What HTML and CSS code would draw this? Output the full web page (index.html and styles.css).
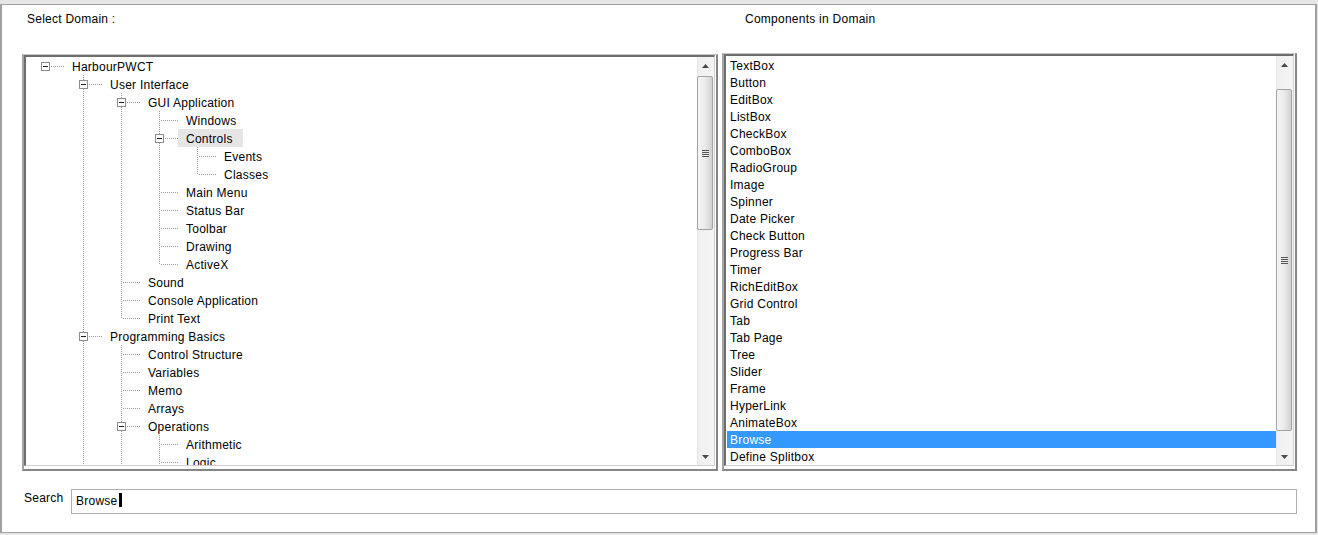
FILE: index.html
```html
<!DOCTYPE html>
<html>
<head>
<meta charset="utf-8">
<title>Select Domain</title>
<link rel="stylesheet" href="styles.css">
</head>
<body>
<div class="window">
  <div class="header">
    <div class="hcell">Select Domain :</div>
    <div class="hcell2">Components in Domain</div>
  </div>
  <div class="panes">
    <div class="pane pane-left">
      <div class="inner">
        <div class="tree">
          <div class="row"><span class="c h"><i class="box"></i></span><span class="lbl">HarbourPWCT</span></div>
          <div class="row"><span class="c"></span><span class="c t"><i class="box"></i></span><span class="lbl">User Interface</span></div>
          <div class="row"><span class="c"></span><span class="c v"></span><span class="c t"><i class="box"></i></span><span class="lbl">GUI Application</span></div>
          <div class="row"><span class="c"></span><span class="c v"></span><span class="c v"></span><span class="c t"></span><span class="lbl">Windows</span></div>
          <div class="row"><span class="c"></span><span class="c v"></span><span class="c v"></span><span class="c t"><i class="box"></i></span><span class="lbl sel">Controls</span></div>
          <div class="row"><span class="c"></span><span class="c v"></span><span class="c v"></span><span class="c v"></span><span class="c t"></span><span class="lbl">Events</span></div>
          <div class="row"><span class="c"></span><span class="c v"></span><span class="c v"></span><span class="c v"></span><span class="c l"></span><span class="lbl">Classes</span></div>
          <div class="row"><span class="c"></span><span class="c v"></span><span class="c v"></span><span class="c t"></span><span class="lbl">Main Menu</span></div>
          <div class="row"><span class="c"></span><span class="c v"></span><span class="c v"></span><span class="c t"></span><span class="lbl">Status Bar</span></div>
          <div class="row"><span class="c"></span><span class="c v"></span><span class="c v"></span><span class="c t"></span><span class="lbl">Toolbar</span></div>
          <div class="row"><span class="c"></span><span class="c v"></span><span class="c v"></span><span class="c t"></span><span class="lbl">Drawing</span></div>
          <div class="row"><span class="c"></span><span class="c v"></span><span class="c v"></span><span class="c l"></span><span class="lbl">ActiveX</span></div>
          <div class="row"><span class="c"></span><span class="c v"></span><span class="c t"></span><span class="lbl">Sound</span></div>
          <div class="row"><span class="c"></span><span class="c v"></span><span class="c t"></span><span class="lbl">Console Application</span></div>
          <div class="row"><span class="c"></span><span class="c v"></span><span class="c l"></span><span class="lbl">Print Text</span></div>
          <div class="row"><span class="c"></span><span class="c t"><i class="box"></i></span><span class="lbl">Programming Basics</span></div>
          <div class="row"><span class="c"></span><span class="c v"></span><span class="c t"></span><span class="lbl">Control Structure</span></div>
          <div class="row"><span class="c"></span><span class="c v"></span><span class="c t"></span><span class="lbl">Variables</span></div>
          <div class="row"><span class="c"></span><span class="c v"></span><span class="c t"></span><span class="lbl">Memo</span></div>
          <div class="row"><span class="c"></span><span class="c v"></span><span class="c t"></span><span class="lbl">Arrays</span></div>
          <div class="row"><span class="c"></span><span class="c v"></span><span class="c t"><i class="box"></i></span><span class="lbl">Operations</span></div>
          <div class="row"><span class="c"></span><span class="c v"></span><span class="c v"></span><span class="c t"></span><span class="lbl">Arithmetic</span></div>
          <div class="row"><span class="c"></span><span class="c v"></span><span class="c v"></span><span class="c t"></span><span class="lbl">Logic</span></div>
        </div>
        <div class="sb">
          <div class="arr"><svg width="7" height="4" viewBox="0 0 7 4"><path d="M3.5 0L7 4H0Z" fill="#4a4a4a"/></svg></div>
          <div class="trk"><div class="thumb thumb-left"><span class="grip"></span></div></div>
          <div class="arr"><svg width="7" height="4" viewBox="0 0 7 4"><path d="M0 0H7L3.5 4Z" fill="#4a4a4a"/></svg></div>
        </div>
      </div>
    </div>
    <div class="pane pane-right">
      <div class="inner">
        <div class="list">
          <div class="item">TextBox</div>
          <div class="item">Button</div>
          <div class="item">EditBox</div>
          <div class="item">ListBox</div>
          <div class="item">CheckBox</div>
          <div class="item">ComboBox</div>
          <div class="item">RadioGroup</div>
          <div class="item">Image</div>
          <div class="item">Spinner</div>
          <div class="item">Date Picker</div>
          <div class="item">Check Button</div>
          <div class="item">Progress Bar</div>
          <div class="item">Timer</div>
          <div class="item">RichEditBox</div>
          <div class="item">Grid Control</div>
          <div class="item">Tab</div>
          <div class="item">Tab Page</div>
          <div class="item">Tree</div>
          <div class="item">Slider</div>
          <div class="item">Frame</div>
          <div class="item">HyperLink</div>
          <div class="item">AnimateBox</div>
          <div class="item sel">Browse</div>
          <div class="item">Define Splitbox</div>
        </div>
        <div class="sb">
          <div class="arr"><svg width="7" height="4" viewBox="0 0 7 4"><path d="M3.5 0L7 4H0Z" fill="#4a4a4a"/></svg></div>
          <div class="trk"><div class="thumb thumb-right"><span class="grip"></span></div></div>
          <div class="arr"><svg width="7" height="4" viewBox="0 0 7 4"><path d="M0 0H7L3.5 4Z" fill="#4a4a4a"/></svg></div>
        </div>
      </div>
    </div>
  </div>
  <div class="search">
    <div class="search-label">Search</div>
    <div class="input">Browse<span class="caret"></span></div>
  </div>
</div>
</body>
</html>
```

FILE: styles.css
```css
body {
  margin: 0;
  background: #e6e6e6;
  font-family: "Liberation Sans", Arial, sans-serif;
  font-size: 12px;
  letter-spacing: 0.25px;
  color: #000;
}

.window {
  box-sizing: border-box;
  height: 529px;
  margin: 4px 1px 0 0;
  border: 1px solid #a0a0a0;
  border-left-width: 2px;
  border-right-width: 2px;
  background: #fff;
  display: flex;
  flex-direction: column;
}

.header {
  display: flex;
  padding: 7px 0 0 25px;
  height: 14px;
  line-height: 14px;
  white-space: nowrap;
}

.hcell {
  width: 718px;
}

.panes {
  display: flex;
  align-items: flex-end;
  gap: 4px;
  margin-top: 27px;
  padding-left: 20px;
}

.pane {
  box-sizing: border-box;
  display: flex;
  border-style: solid;
  border-width: 1px 2px 2px 2px;
  border-color: #c8c8c8 #858585 #858585 #a4a4a4;
  padding: 0 1px 3px 0;
  background: #fff;
}

.pane-left {
  width: 696px;
  height: 417px;
}

.pane-right {
  width: 575px;
  height: 418px;
}

.inner {
  display: flex;
  flex: 1;
  min-width: 0;
  border-style: solid;
  border-width: 2px 1px 1px 2px;
  border-color: #6e6e6e #d0d0d0 #d0d0d0 #6e6e6e;
  overflow: hidden;
}

/* tree */
.tree {
  flex: 1;
  min-width: 0;
  overflow: hidden;
}

.row {
  display: flex;
  height: 18px;
  white-space: nowrap;
}

.c {
  flex: 0 0 38px;
  height: 18px;
  background-repeat: no-repeat;
}

.v {
  background-image: repeating-linear-gradient(to bottom, #9a9a9a 0 1px, transparent 1px 2px);
  background-position: 19px 0;
  background-size: 1px 18px;
}

.t {
  background-image:
    repeating-linear-gradient(to right, #9a9a9a 0 1px, transparent 1px 2px),
    repeating-linear-gradient(to bottom, #9a9a9a 0 1px, transparent 1px 2px);
  background-position: 21px 9px, 19px 0;
  background-size: 17px 1px, 1px 18px;
}

.l {
  background-image:
    repeating-linear-gradient(to right, #9a9a9a 0 1px, transparent 1px 2px),
    repeating-linear-gradient(to bottom, #9a9a9a 0 1px, transparent 1px 2px);
  background-position: 21px 9px, 19px 0;
  background-size: 17px 1px, 1px 10px;
}

.h {
  background-image: repeating-linear-gradient(to right, #9a9a9a 0 1px, transparent 1px 2px);
  background-position: 21px 9px;
  background-size: 17px 1px;
}

.box {
  display: block;
  box-sizing: border-box;
  width: 9px;
  height: 9px;
  margin: 5px 0 0 15px;
  border: 1px solid #8d8d8d;
  background-color: #fff;
  background-image: linear-gradient(#1e1e1e, #1e1e1e);
  background-size: 5px 1px;
  background-position: 1px 3px;
  background-repeat: no-repeat;
}

.lbl {
  display: block;
  box-sizing: border-box;
  height: 18px;
  padding: 1px 10px 0 8px;
  line-height: 18px;
  overflow: hidden;
}

.lbl.sel {
  background: #e6e6e6;
}

/* list */
.list {
  flex: 1;
  min-width: 0;
  padding: 1px 0 0 1px;
  overflow: hidden;
}

.item {
  box-sizing: border-box;
  height: 17px;
  padding: 1px 0 0 3px;
  line-height: 17px;
  white-space: nowrap;
  overflow: hidden;
}

.item.sel {
  background: #3399ff;
  color: #fff;
}

/* scrollbars */
.sb {
  flex: 0 0 17px;
  box-sizing: border-box;
  display: flex;
  flex-direction: column;
  background: linear-gradient(to right, #e4e4e4 0, #f0f0f0 2px, #f4f4f4 100%);
}

.arr {
  height: 17px;
  display: flex;
  align-items: center;
  justify-content: center;
}

.trk {
  flex: 1;
  display: flex;
  flex-direction: column;
}

.thumb {
  box-sizing: border-box;
  margin: 0 1px 0 0;
  border: 1px solid #a3a3a3;
  border-radius: 2px;
  background: linear-gradient(to right, #f4f4f4 0%, #ececec 45%, #dcdcdc 80%, #cfcfcf 100%);
  display: flex;
  align-items: center;
  justify-content: center;
}

.thumb-left {
  margin-top: 2px;
  height: 154px;
}

.thumb-right {
  margin-top: 16px;
  height: 342px;
}

.grip {
  width: 7px;
  height: 7px;
  background: repeating-linear-gradient(to bottom, #555 0 1px, #e9e9e9 1px 2px);
}

/* search */
.search {
  display: flex;
  align-items: flex-start;
  margin-top: 18px;
  padding-left: 22px;
}

.search-label {
  width: 47px;
  margin-top: 2px;
  line-height: 14px;
}

.input {
  box-sizing: border-box;
  width: 1226px;
  height: 25px;
  border: 1px solid #b0b0b0;
  padding-left: 4px;
  line-height: 23px;
  white-space: nowrap;
}

.caret {
  display: inline-block;
  width: 3px;
  height: 14px;
  margin-left: 1px;
  background: #000;
  vertical-align: -2px;
}
```
